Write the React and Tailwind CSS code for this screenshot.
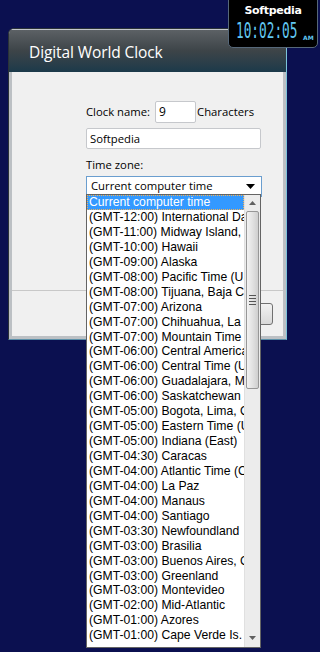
import React from "react";

const zones = [
	"(GMT-12:00) International Date Line West",
	"(GMT-11:00) Midway Island, Samoa",
	"(GMT-10:00) Hawaii",
	"(GMT-09:00) Alaska",
	"(GMT-08:00) Pacific Time (US & Canada)",
	"(GMT-08:00) Tijuana, Baja California",
	"(GMT-07:00) Arizona",
	"(GMT-07:00) Chihuahua, La Paz, Mazatlan",
	"(GMT-07:00) Mountain Time (US & Canada)",
	"(GMT-06:00) Central America",
	"(GMT-06:00) Central Time (US & Canada)",
	"(GMT-06:00) Guadalajara, Mexico City",
	"(GMT-06:00) Saskatchewan",
	"(GMT-05:00) Bogota, Lima, Quito",
	"(GMT-05:00) Eastern Time (US & Canada)",
	"(GMT-05:00) Indiana (East)",
	"(GMT-04:30) Caracas",
	"(GMT-04:00) Atlantic Time (Canada)",
	"(GMT-04:00) La Paz",
	"(GMT-04:00) Manaus",
	"(GMT-04:00) Santiago",
	"(GMT-03:30) Newfoundland",
	"(GMT-03:00) Brasilia",
	"(GMT-03:00) Buenos Aires, Georgetown",
	"(GMT-03:00) Greenland",
	"(GMT-03:00) Montevideo",
	"(GMT-02:00) Mid-Atlantic",
	"(GMT-01:00) Azores",
	"(GMT-01:00) Cape Verde Is.",
];

// little desktop clock gadget in the corner
const Gadget = () => (
	<div className="absolute left-[228px] top-[-6px] w-[90px] h-[54px] rounded-[5px] bg-black border border-[#56687a] flex flex-col items-center pt-[9px]">
		<div className="text-white text-[11px] font-bold leading-[13px] font-['DejaVu_Sans',sans-serif] tracking-[-0.3px]">
			Softpedia
		</div>
		<div className="w-full flex items-end mt-[3px] pl-[7px]">
			<span className="w-[64px] block overflow-visible">
				<span className="inline-block origin-left scale-x-[0.58] text-[#62c8f2] text-[22px] leading-[20px] font-['DejaVu_Sans_Mono',monospace] whitespace-nowrap">
					10:02:05
				</span>
			</span>
			<span className="ml-[3px] text-[#62c8f2] text-[6px] leading-[12px] font-bold font-['DejaVu_Sans',sans-serif]">
				AM
			</span>
		</div>
	</div>
);

const Scrollbar = () => (
	<div className="w-[16px] h-full bg-[#ececec] border-l border-[#e0e0e0] flex flex-col">
		<div className="h-[16px] flex items-center justify-center">
			<svg width="7" height="4" viewBox="0 0 7 4">
				<path d="M0 4 L3.5 0 L7 4 Z" fill="#606060" />
			</svg>
		</div>
		<div className="h-[178px] mx-[1px] rounded-[2px] border border-[#979797] bg-gradient-to-r from-[#f3f3f3] via-[#e2e2e2] to-[#cfcfcf] flex items-center justify-center">
			<div className="flex flex-col gap-[2px]">
				<div className="w-[7px] h-px bg-[#555]" />
				<div className="w-[7px] h-px bg-[#555]" />
				<div className="w-[7px] h-px bg-[#555]" />
				<div className="w-[7px] h-px bg-[#555]" />
			</div>
		</div>
		<div className="flex-1" />
		<div className="h-[18px] flex items-center justify-center">
			<svg width="7" height="4" viewBox="0 0 7 4">
				<path d="M0 0 L7 0 L3.5 4 Z" fill="#606060" />
			</svg>
		</div>
	</div>
);

const DropList = () => (
	<div className="absolute left-[86px] top-[194px] w-[175px] h-[454px] bg-white border border-[#646464] flex overflow-hidden">
		<div className="flex-1 min-w-0 flex flex-col font-['Liberation_Sans',Arial,sans-serif] text-[12.2px] text-black">
			<div className="h-[15px] leading-[13px] pl-[1px] bg-[#3399ff] text-white border border-dotted border-[#f2b25a] whitespace-nowrap overflow-hidden">
				Current computer time
			</div>
			{zones.map((z) => (
				<div key={z} className="h-[14.95px] leading-[15px] pl-[2px] whitespace-nowrap overflow-hidden">
					{z}
				</div>
			))}
		</div>
		<Scrollbar />
	</div>
);

const Dialog = () => (
	<div className="absolute left-[8px] top-[28px] w-[279px] h-[312px] rounded-t-[6px] border border-[#2a3238] border-r-[#7cc3dc] border-b-[#5a8fa8] bg-[#bcc0c4] flex flex-col overflow-hidden">
		{/* title bar */}
		<div className="h-[43px] shrink-0 bg-gradient-to-b from-[#5c6165] via-[#3d4448] to-[#1b3a4a] border-t border-[#c4c8cc] flex items-center pl-[20px] pt-[4px]">
			<span className="text-white text-[15.5px] font-['Open_Sans',sans-serif] tracking-[-0.1px]">
				Digital World Clock
			</span>
		</div>
		<div className="flex-1 mx-[3px] mb-[3px] bg-[#f0f0f0] flex flex-col font-['Open_Sans',sans-serif] text-[11.3px] text-black">
			<div className="h-[218px] pl-[74px] pt-[29px] flex flex-col">
				<div className="flex items-center h-[22px]">
					<span className="mr-[5px]">Clock name:</span>
					<div className="w-[41px] h-[22px] bg-white border border-[#c6c8cc] rounded-[2px] px-[3px] leading-[20px] text-[12px]">
						9
					</div>
					<span className="ml-[1px]">Characters</span>
				</div>
				<div className="mt-[5px] w-[175px] h-[21px] bg-white border border-[#c6c8cc] rounded-[2px] px-[3px] leading-[19px]">
					Softpedia
				</div>
				<div className="mt-[8px] leading-[16px]">Time zone:</div>
				<div className="mt-[3px] w-[176px] h-[21px] bg-white border border-[#6a9ecf] flex items-center justify-between pl-[4px] pr-[6px]">
					<span>Current computer time</span>
					<svg width="9" height="5" viewBox="0 0 9 5">
						<path d="M0 0 L9 0 L4.5 5 Z" fill="#000" />
					</svg>
				</div>
			</div>
			<div className="border-t border-[#c8c8c8] flex-1 flex justify-end items-start pt-[12px] pr-[10px]">
				<div className="w-[60px] h-[22px] rounded-[3px] border border-[#707070] bg-gradient-to-b from-[#f2f2f2] to-[#d8d8d8]" />
			</div>
		</div>
	</div>
);

export default function App() {
	return (
		<div className="relative w-[320px] h-[652px] overflow-hidden bg-[#0b1050]">
			<Dialog />
			<Gadget />
			<DropList />
		</div>
	);
}
